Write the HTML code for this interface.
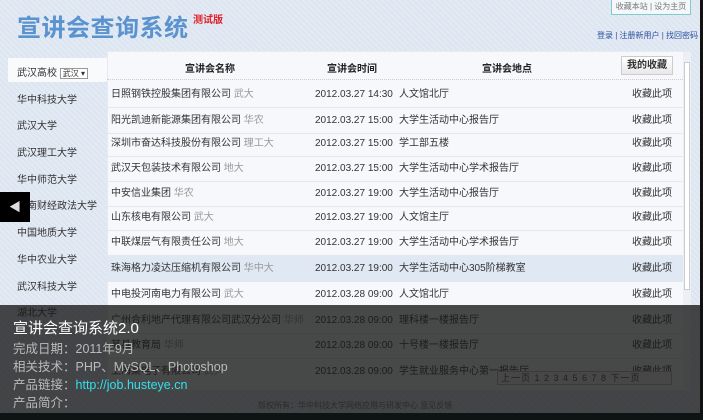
<!DOCTYPE html>
<html><head><meta charset="utf-8"><style>
*{margin:0;padding:0;box-sizing:border-box}
body{width:703px;height:420px;overflow:hidden;position:relative;font-family:"Liberation Sans","Noto Sans CJK SC",sans-serif;font-size:11px;color:#333;
background:repeating-linear-gradient(45deg,#dce5f0 0 2px,#e3eaf4 2px 4px);}
.abs{position:absolute}
.logo{left:17px;top:8px;font-size:24px;font-weight:bold;color:#5a93cf;letter-spacing:.5px}
.test{left:193px;top:11px;color:#e0202a;font-size:10px;font-weight:bold}
.topbox{left:611px;top:0;width:80px;height:15px;border:1px solid #7fcccc;border-top:none;background:#f4f8fb;font-size:8px;color:#777;text-align:center;line-height:13px}
.login{left:597px;top:30px;font-size:8px;color:#2a4fa0}
.panel{left:107px;top:51px;width:583px;height:340px;background:#f6f8fb;border:1px solid #e6ebf2}
.hdr{left:107px;top:52px;width:576px;height:28px;font-weight:bold;font-size:10px;color:#222;border-bottom:1px dotted #ccc}
.row{left:107px;width:576px;height:26px;border-bottom:1px solid #e4e8ee;line-height:26px;font-size:10px}
.row span{position:absolute}
.g{color:#999;font-style:normal}
.btn{left:621px;top:56px;width:52px;height:19px;border:1px solid #ccc;background:linear-gradient(#fff,#e8e8e8);font-weight:bold;text-align:center;line-height:17px;font-size:10px}
.side{left:17px;font-size:10px;color:#333}
.selbox{left:8px;top:58px;width:99px;height:24px;background:#f8fafc}
.sb{left:683px;top:52px;width:8px;height:335px;background:#eceff3}
.thumb{left:684px;top:62px;width:6px;height:228px;background:#fff;border:1px solid #ccc}
.ov{left:0;top:305px;width:700px;height:108px;background:rgba(22,22,22,.78)}
.ovt{left:13px;color:#bbb;font-size:12.5px;white-space:nowrap}
</style></head><body>
<div class="abs logo">宣讲会查询系统</div>
<div class="abs test">测试版</div>
<div class="abs topbox">收藏本站 | 设为主页</div>
<div class="abs login">登录 | 注册新用户 | 找回密码</div>
<div class="abs selbox"></div>
<div class="abs side" style="top:64px">武汉高校 <span style="border:1px solid #999;background:#fff;font-size:8px;padding:0 2px">武汉 ▾</span></div>
<div class="abs side" style="top:91px">华中科技大学</div>
<div class="abs side" style="top:117px">武汉大学</div>
<div class="abs side" style="top:144px">武汉理工大学</div>
<div class="abs side" style="top:171px">华中师范大学</div>
<div class="abs side" style="top:197px">中南财经政法大学</div>
<div class="abs side" style="top:224px">中国地质大学</div>
<div class="abs side" style="top:251px">华中农业大学</div>
<div class="abs side" style="top:278px">武汉科技大学</div>
<div class="abs side" style="top:304px">湖北大学</div>
<div class="abs panel"></div>
<div class="abs hdr"><span class="abs" style="left:78px;top:8px">宣讲会名称</span><span class="abs" style="left:220px;top:8px">宣讲会时间</span><span class="abs" style="left:375px;top:8px">宣讲会地点</span></div>
<div class="abs btn">我的收藏</div>
<div class="abs row" style="top:82px"><span style="left:4px">日照钢铁控股集团有限公司 <i class="g">武大</i></span><span style="left:208px">2012.03.27 14:30</span><span style="left:292px">人文馆北厅</span><span style="left:525px">收藏此项</span></div>
<div class="abs row" style="top:108px"><span style="left:4px">阳光凯迪新能源集团有限公司 <i class="g">华农</i></span><span style="left:208px">2012.03.27 15:00</span><span style="left:292px">大学生活动中心报告厅</span><span style="left:525px">收藏此项</span></div>
<div class="abs row" style="top:131px"><span style="left:4px">深圳市奋达科技股份有限公司 <i class="g">理工大</i></span><span style="left:208px">2012.03.27 15:00</span><span style="left:292px">学工部五楼</span><span style="left:525px">收藏此项</span></div>
<div class="abs row" style="top:156px"><span style="left:4px">武汉天包装技术有限公司 <i class="g">地大</i></span><span style="left:208px">2012.03.27 15:00</span><span style="left:292px">大学生活动中心学术报告厅</span><span style="left:525px">收藏此项</span></div>
<div class="abs row" style="top:181px"><span style="left:4px">中安信业集团 <i class="g">华农</i></span><span style="left:208px">2012.03.27 19:00</span><span style="left:292px">大学生活动中心报告厅</span><span style="left:525px">收藏此项</span></div>
<div class="abs row" style="top:205px"><span style="left:4px">山东核电有限公司 <i class="g">武大</i></span><span style="left:208px">2012.03.27 19:00</span><span style="left:292px">人文馆主厅</span><span style="left:525px">收藏此项</span></div>
<div class="abs row" style="top:230px"><span style="left:4px">中联煤层气有限责任公司 <i class="g">地大</i></span><span style="left:208px">2012.03.27 19:00</span><span style="left:292px">大学生活动中心学术报告厅</span><span style="left:525px">收藏此项</span></div>
<div class="abs row" style="top:256px;background:#dfe8f3"><span style="left:4px">珠海格力凌达压缩机有限公司 <i class="g">华中大</i></span><span style="left:208px">2012.03.27 19:00</span><span style="left:292px">大学生活动中心305阶梯教室</span><span style="left:525px">收藏此项</span></div>
<div class="abs row" style="top:282px"><span style="left:4px">中电投河南电力有限公司 <i class="g">武大</i></span><span style="left:208px">2012.03.28 09:00</span><span style="left:292px">人文馆北厅</span><span style="left:525px">收藏此项</span></div>
<div class="abs row" style="top:308px"><span style="left:4px">广州合利地产代理有限公司武汉分公司 <i class="g">华师</i></span><span style="left:208px">2012.03.28 09:00</span><span style="left:292px">理科楼一楼报告厅</span><span style="left:525px">收藏此项</span></div>
<div class="abs row" style="top:333px"><span style="left:4px">某县教育局 <i class="g">华师</i></span><span style="left:208px">2012.03.28 09:00</span><span style="left:292px">十号楼一楼报告厅</span><span style="left:525px">收藏此项</span></div>
<div class="abs row" style="top:359px;border:none"><span style="left:4px">上海某电子有限公司 <i class="g">武大</i></span><span style="left:208px">2012.03.28 09:00</span><span style="left:292px">学生就业服务中心第一报告厅</span><span style="left:525px">收藏此项</span></div>
<div class="abs" style="left:497px;top:371px;width:175px;height:14px;border:1px solid #bbb;background:#f3f5f8;font-size:9px;color:#444;line-height:12px;padding-left:3px;letter-spacing:1px">上一页 1 2 3 4 5 6 7 8 下一页</div>
<div class="abs sb"></div><div class="abs thumb"></div>
<div class="abs" style="left:258px;top:400px;font-size:8px;color:#777">版权所有：华中科技大学网络应用与研发中心 意见反馈</div>
<div class="abs" style="left:700px;top:0;width:3px;height:420px;background:#111"></div>
<div class="abs" style="left:0;top:192px;width:30px;height:30px;background:#000;color:#ddd;font-size:12px;text-align:center;line-height:30px">◀</div>
<div class="abs ov"></div>
<div class="abs" style="left:0;top:413px;width:703px;height:7px;background:#0e1414"></div>
<div class="abs ovt" style="top:317px;color:#fff;font-size:15px">宣讲会查询系统2.0</div>
<div class="abs ovt" style="top:338px">完成日期：2011年9月</div>
<div class="abs ovt" style="top:356px">相关技术：PHP、MySQL、Photoshop</div>
<div class="abs ovt" style="top:374px">产品链接：<span style="color:#33e0ee">http://job.husteye.cn</span></div>
<div class="abs ovt" style="top:392px">产品简介：</div>
</body></html>
